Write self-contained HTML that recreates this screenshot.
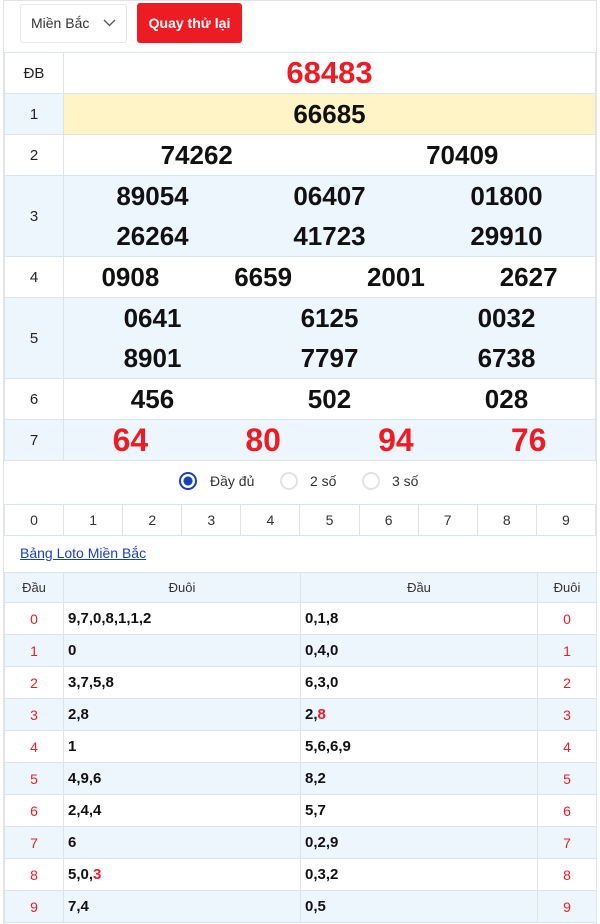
<!DOCTYPE html>
<html><head><meta charset="utf-8"><style>
*{box-sizing:border-box;margin:0;padding:0}
body{width:600px;height:924px;background:#fff;font-family:"Liberation Sans",sans-serif;position:relative;overflow:hidden;color:#111}
.frame{position:absolute;left:3px;top:0;width:594px;height:924px;border-left:1px solid #e3e3e3;border-right:1px solid #e3e3e3;border-top:1px solid #e3e3e3}
.sel{position:absolute;left:20px;top:4px;width:107px;height:39px;border:1px solid #e6e6e6;border-radius:3px;font-size:14px;line-height:37px;padding-left:10px;color:#333}
.sel svg{position:absolute;right:10px;top:14px}
.btn{position:absolute;left:137px;top:3px;width:105px;height:40px;background:#ed1c24;border-radius:3px;color:#fff;font-size:14px;font-weight:bold;text-align:center;line-height:40px}
table{border-collapse:collapse;position:absolute;left:4px;width:592px;table-layout:fixed}
td{border:1px solid #dde3ea;text-align:center;padding:0}
.res td.l{width:59px;font-size:15px;color:#222}
.res .n{font-size:26px;font-weight:bold;display:flex;justify-content:space-around}
.res .n span{flex:1;text-align:center}
.blue{background:#eef6fd}
.red{color:#ed1c24}
.radios{position:absolute;top:460px;left:0;width:600px;height:44px;font-size:14px;color:#333}
.r{position:absolute;top:12px;width:18px;height:18px;border-radius:50%;border:2px solid #e2e2e2}
.rt{position:absolute;top:13px}
.dig td{height:31px;font-size:14px;color:#333}
.link{position:absolute;left:20px;top:545px;font-size:14px;color:#1a3fbd;text-decoration:underline}
.lo td{height:32px;font-size:14px}
.lo td.t{text-align:left;padding-left:4px;font-weight:bold;font-size:15px}
.lo td.c{color:#ed1c24}
.lo tr.h td{height:30px;font-size:13px;color:#333;background:#eef6fd}
</style></head><body>
<div class="frame"></div>
<div class="sel">Miền Bắc<svg width="13" height="8" viewBox="0 0 13 8"><path d="M1 1l5.5 5.5L12 1" fill="none" stroke="#555" stroke-width="1.3"/></svg></div>
<div class="btn">Quay thử lại</div>
<table class="res" style="top:52px">
<tr style="height:41px"><td class="l">ĐB</td><td><div class="n red" style="font-size:31px"><span>68483</span></div></td></tr>
<tr style="height:41px"><td class="l blue">1</td><td style="background:#fef4c6"><div class="n"><span>66685</span></div></td></tr>
<tr style="height:41px"><td class="l">2</td><td><div class="n"><span>74262</span><span>70409</span></div></td></tr>
<tr style="height:81px" class="blue"><td class="l">3</td><td><div class="n" style="line-height:40px"><span>89054<br>26264</span><span>06407<br>41723</span><span>01800<br>29910</span></div></td></tr>
<tr style="height:41px"><td class="l">4</td><td><div class="n"><span>0908</span><span>6659</span><span>2001</span><span>2627</span></div></td></tr>
<tr style="height:81px" class="blue"><td class="l">5</td><td><div class="n" style="line-height:40px"><span>0641<br>8901</span><span>6125<br>7797</span><span>0032<br>6738</span></div></td></tr>
<tr style="height:41px"><td class="l">6</td><td><div class="n"><span>456</span><span>502</span><span>028</span></div></td></tr>
<tr style="height:41px" class="blue"><td class="l">7</td><td><div class="n red" style="font-size:32px"><span>64</span><span>80</span><span>94</span><span>76</span></div></td></tr>
</table>
<div class="radios">
<div class="r" style="left:179px;border:2px solid #1a3fbd;background:radial-gradient(circle,#1a3fbd 4px,#fff 5px)"></div><span class="rt" style="left:210px">Đầy đủ</span>
<div class="r" style="left:280px"></div><span class="rt" style="left:310px">2 số</span>
<div class="r" style="left:362px"></div><span class="rt" style="left:392px">3 số</span>
</div>
<table class="dig" style="top:504px"><tr><td>0</td><td>1</td><td>2</td><td>3</td><td>4</td><td>5</td><td>6</td><td>7</td><td>8</td><td>9</td></tr></table>
<div class="link">Bảng Loto Miền Bắc</div>
<table class="lo" style="top:572px">
<colgroup><col style="width:59px"><col style="width:237px"><col style="width:237px"><col style="width:59px"></colgroup>
<tr class="h"><td>Đầu</td><td>Đuôi</td><td>Đầu</td><td>Đuôi</td></tr>
<tr><td class="c">0</td><td class="t">9,7,0,8,1,1,2</td><td class="t">0,1,8</td><td class="c">0</td></tr>
<tr class="blue"><td class="c">1</td><td class="t">0</td><td class="t">0,4,0</td><td class="c">1</td></tr>
<tr><td class="c">2</td><td class="t">3,7,5,8</td><td class="t">6,3,0</td><td class="c">2</td></tr>
<tr class="blue"><td class="c">3</td><td class="t">2,8</td><td class="t">2,<span class="red">8</span></td><td class="c">3</td></tr>
<tr><td class="c">4</td><td class="t">1</td><td class="t">5,6,6,9</td><td class="c">4</td></tr>
<tr class="blue"><td class="c">5</td><td class="t">4,9,6</td><td class="t">8,2</td><td class="c">5</td></tr>
<tr><td class="c">6</td><td class="t">2,4,4</td><td class="t">5,7</td><td class="c">6</td></tr>
<tr class="blue"><td class="c">7</td><td class="t">6</td><td class="t">0,2,9</td><td class="c">7</td></tr>
<tr><td class="c">8</td><td class="t">5,0,<span class="red">3</span></td><td class="t">0,3,2</td><td class="c">8</td></tr>
<tr class="blue"><td class="c">9</td><td class="t">7,4</td><td class="t">0,5</td><td class="c">9</td></tr>
</table>
</body></html>
